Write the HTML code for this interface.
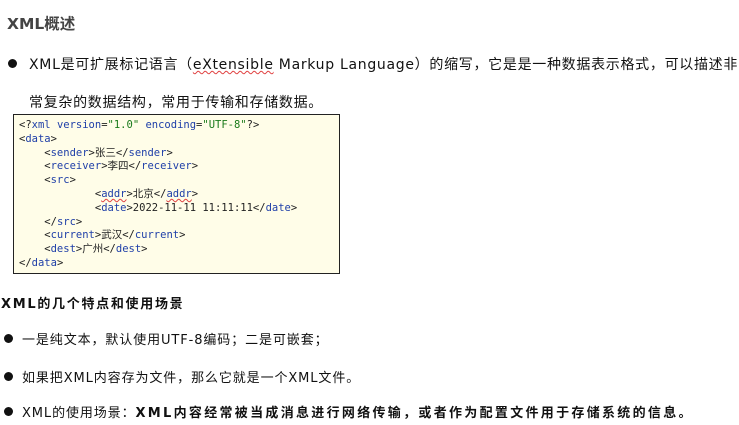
<!DOCTYPE html>
<html><head><meta charset="utf-8"><style>
body{margin:0;width:739px;height:425px;background:#fff;position:relative;overflow:hidden;font-family:"DejaVu Sans","Noto Sans CJK SC",sans-serif;color:#111}
.a{position:absolute;white-space:nowrap}
.dot{position:absolute;width:9px;height:9px;border-radius:50%;background:#111}
.box{position:absolute;left:13px;top:114px;width:325px;height:158px;border:1px solid #222;background:#fffde8}
.code{position:absolute;left:5px;top:4px;font-family:"DejaVu Sans Mono","Noto Sans CJK SC",monospace;font-size:10.5px;line-height:13.8px;color:#222;white-space:pre}
.b{color:#1f3fa8}.g{color:#1a7a1a}
.w{text-decoration:underline wavy #e04040;text-decoration-thickness:1px}
</style></head><body>
<div class="a" style="left:7px;top:12px;font-size:15.5px;font-weight:bold;color:#444">XML概述</div>
<div class="dot" style="left:8px;top:59px"></div>
<div class="a" style="left:29px;top:54px;font-size:14px;letter-spacing:0.7px">XML是可扩展标记语言（<span class="w">eXtensible</span> Markup Language）的缩写，它是是一种数据表示格式，可以描述非</div>
<div class="a" style="left:29px;top:92px;font-size:14px;letter-spacing:0.7px">常复杂的数据结构，常用于传输和存储数据。</div>
<div class="box"><div class="code">&lt;?<span class="b">xml version</span>=<span class="g">"1.0"</span> <span class="b">encoding</span>=<span class="g">"UTF-8"</span>?&gt;
&lt;<span class="b">data</span>&gt;
    &lt;<span class="b">sender</span>&gt;张三&lt;/<span class="b">sender</span>&gt;
    &lt;<span class="b">receiver</span>&gt;李四&lt;/<span class="b">receiver</span>&gt;
    &lt;<span class="b">src</span>&gt;
            &lt;<span class="b w">addr</span>&gt;北京&lt;/<span class="b w">addr</span>&gt;
            &lt;<span class="b">date</span>&gt;2022-11-11 11:11:11&lt;/<span class="b">date</span>&gt;
    &lt;/<span class="b">src</span>&gt;
    &lt;<span class="b">current</span>&gt;武汉&lt;/<span class="b">current</span>&gt;
    &lt;<span class="b">dest</span>&gt;广州&lt;/<span class="b">dest</span>&gt;
&lt;/<span class="b">data</span>&gt;</div></div>
<div class="a" style="left:1px;top:293px;font-size:13px;font-weight:bold;letter-spacing:1.7px">XML的几个特点和使用场景</div>
<div class="dot" style="left:4px;top:334px"></div>
<div class="a" style="left:22px;top:329px;font-size:13px;letter-spacing:0.9px">一是纯文本，默认使用UTF-8编码；二是可嵌套；</div>
<div class="dot" style="left:4px;top:372px"></div>
<div class="a" style="left:22px;top:367px;font-size:13px;letter-spacing:0.9px">如果把XML内容存为文件，那么它就是一个XML文件。</div>
<div class="dot" style="left:4px;top:407px"></div>
<div class="a" style="left:22px;top:402px;font-size:13px;letter-spacing:0.9px">XML的使用场景：<b style="letter-spacing:2.3px">XML内容经常被当成消息进行网络传输，或者作为配置文件用于存储系统的信息。</b></div>
</body></html>
